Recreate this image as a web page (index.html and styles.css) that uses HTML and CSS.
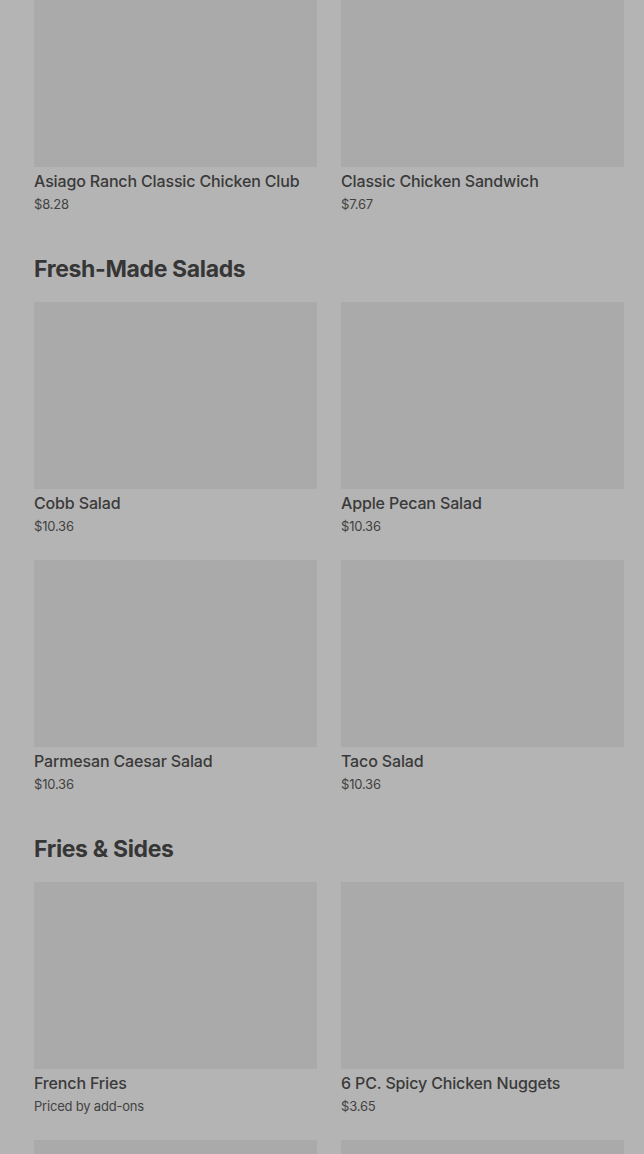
FILE: index.html
```html
<!DOCTYPE html>
<html lang="en">
<head>
    <meta charset="UTF-8">
    <meta name="viewport" content="width=device-width, initial-scale=1.0">
    <title>Menu</title>
    <link rel="stylesheet" href="styles.css">
</head>
<body>
    <div class="menu">
        <section class="section">
            <div class="grid">
                <div class="item">
                    <div class="thumb"></div>
                    <div class="name">Asiago Ranch Classic Chicken Club</div>
                    <div class="price">$8.28</div>
                </div>
                <div class="item">
                    <div class="thumb"></div>
                    <div class="name">Classic Chicken Sandwich</div>
                    <div class="price">$7.67</div>
                </div>
            </div>
        </section>

        <section class="section">
            <h2 class="section-title">Fresh-Made Salads</h2>
            <div class="grid">
                <div class="item">
                    <div class="thumb"></div>
                    <div class="name">Cobb Salad</div>
                    <div class="price">$10.36</div>
                </div>
                <div class="item">
                    <div class="thumb"></div>
                    <div class="name">Apple Pecan Salad</div>
                    <div class="price">$10.36</div>
                </div>
                <div class="item">
                    <div class="thumb"></div>
                    <div class="name">Parmesan Caesar Salad</div>
                    <div class="price">$10.36</div>
                </div>
                <div class="item">
                    <div class="thumb"></div>
                    <div class="name">Taco Salad</div>
                    <div class="price">$10.36</div>
                </div>
            </div>
        </section>

        <section class="section">
            <h2 class="section-title">Fries &amp; Sides</h2>
            <div class="grid">
                <div class="item">
                    <div class="thumb"></div>
                    <div class="name">French Fries</div>
                    <div class="price">Priced by add-ons</div>
                </div>
                <div class="item">
                    <div class="thumb"></div>
                    <div class="name">6 PC. Spicy Chicken Nuggets</div>
                    <div class="price">$3.65</div>
                </div>
                <div class="item">
                    <div class="thumb"></div>
                </div>
                <div class="item">
                    <div class="thumb"></div>
                </div>
            </div>
        </section>
    </div>
</body>
</html>
```

FILE: styles.css
```css
html, body {
    margin: 0;
    padding: 0;
}

body {
    background: #b4b4b4;
    font-family: Inter, "Noto Sans", sans-serif;
    color: #3a3a3a;
    overflow: hidden;
}

/* list is scrolled a little, first row of photos is cut off */
.menu {
    margin-top: -20px;
    padding: 0 20px 0 34px;
}

.section + .section {
    margin-top: 42px;
}

.section-title {
    margin: 0 0 19px;
    font-size: 23px;
    line-height: 28px;
    font-weight: 700;
    letter-spacing: -0.35px;
    color: #363636;
}

.grid {
    display: grid;
    grid-template-columns: 283px 283px;
    column-gap: 24px;
    row-gap: 25px;
}

.item {
    display: flex;
    flex-direction: column;
}

.thumb {
    height: 187px;
    background: #aaaaaa;
}

.name {
    margin-top: 4px;
    font-size: 16px;
    line-height: 20px;
    font-weight: 500;
    letter-spacing: -0.15px;
}

.price {
    margin-top: 4px;
    font-size: 13px;
    line-height: 18px;
    letter-spacing: -0.2px;
    color: #424242;
}
```
